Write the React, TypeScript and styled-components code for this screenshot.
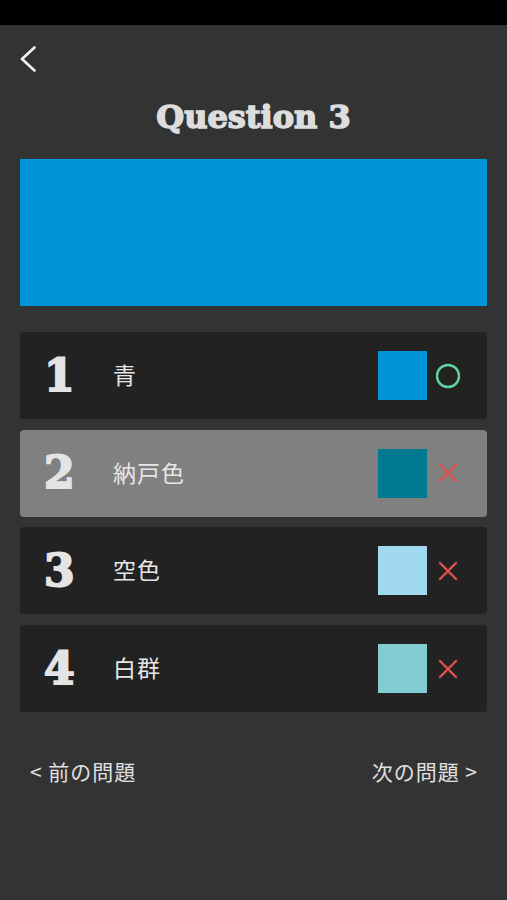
import React from 'react'
import styled, { createGlobalStyle } from 'styled-components'

const GlobalStyle = createGlobalStyle`
  body{
    margin: 0;
    background: #333333;
    font-family: "Noto Sans CJK JP", "Noto Sans", sans-serif;
  }
`

type Choice = {
  no: number
  name: string
  color: string
  correct: boolean
}

const choices: Choice[] = [
  { no: 1, name: '青', color: '#0095d9', correct: true },
  { no: 2, name: '納戸色', color: '#007a91', correct: false },
  { no: 3, name: '空色', color: '#a0d8ef', correct: false },
  { no: 4, name: '白群', color: '#83ccd2', correct: false },
]

const selected = 2

const Quiz = () => {
  return (
    <Screen>
      <GlobalStyle />
      <StatusBar />
      <Header>
        <BackButton aria-label="back">
          <svg width="16" height="26" viewBox="0 0 16 26">
            <polyline points="14.5,1.5 2,13 14.5,24.5" fill="none" stroke="#f2f2f2" strokeWidth="2.6" strokeLinecap="round" strokeLinejoin="round" />
          </svg>
        </BackButton>
        <Title>Question 3</Title>
      </Header>
      <Body>
        <Sample color="#0095d9" />
        <ChoiceList>
          {choices.map((c) => (
            <ChoiceCard key={c.no} $active={c.no === selected}>
              <Number>{c.no}</Number>
              <Name>{c.name}</Name>
              <Swatch color={c.color} />
              <Mark>
                {c.correct ? (
                  <svg width="26" height="26" viewBox="0 0 26 26">
                    <circle cx="13" cy="13" r="11" fill="none" stroke="#5fd69d" strokeWidth="2.4" />
                  </svg>
                ) : (
                  <svg width="26" height="26" viewBox="0 0 26 26">
                    <path d="M5 5 L21 21 M21 5 L5 21" stroke="#e05252" strokeWidth="2.4" strokeLinecap="round" />
                  </svg>
                )}
              </Mark>
            </ChoiceCard>
          ))}
        </ChoiceList>
        <Nav>
          <NavLink>&lt; 前の問題</NavLink>
          <NavLink>次の問題 &gt;</NavLink>
        </Nav>
      </Body>
    </Screen>
  )
}

const Screen = styled.div`
  min-height: 900px;
  background: #333333;
`

const StatusBar = styled.div`
  height: 25px;
  background: #000;
`

const Header = styled.div`
  display: flex;
  flex-direction: column;
  padding: 21px 20px 0;
`

const BackButton = styled.div`
  width: 16px;
  height: 26px;
`

const Title = styled.h1`
  margin: 25px 0 0;
  text-align: center;
  color: #dddddd;
  font-family: "DejaVu Serif", serif;
  font-weight: 900;
  font-size: 32px;
  line-height: 40px;
  -webkit-text-stroke: 1.5px #dddddd;
`

const Body = styled.div`
  padding: 0 20px;
`

const Sample = styled.div<{ color: string }>`
  margin-top: 22px;
  height: 147px;
  background: ${(p) => p.color};
`

const ChoiceList = styled.div`
  display: flex;
  flex-direction: column;
  gap: 10.7px;
  margin-top: 26px;
`

const ChoiceCard = styled.div<{ $active: boolean }>`
  display: flex;
  align-items: center;
  height: 87px;
  padding: 0 26px 0 24px;
  border-radius: 4px;
  background: ${(p) => (p.$active ? '#808080' : '#222222')};
`

const Number = styled.div`
  width: 69px;
  color: #e4e4e4;
  font-family: "DejaVu Serif", serif;
  font-weight: 900;
  font-size: 44px;
  line-height: 1;
  -webkit-text-stroke: 2px #e4e4e4;
`

const Name = styled.div`
  flex: 1;
  color: #e6e6e6;
  font-size: 23px;
  line-height: 30px;
  letter-spacing: 1px;
  padding-bottom: 3px;
`

const Swatch = styled.div<{ color: string }>`
  width: 49px;
  height: 49px;
  background: ${(p) => p.color};
`

const Mark = styled.div`
  width: 26px;
  height: 26px;
  margin-left: 8px;
`

const Nav = styled.div`
  display: flex;
  justify-content: space-between;
  padding: 45px 9px 0 10px;
`

const NavLink = styled.span`
  color: #e0e0e0;
  font-size: 21px;
  line-height: 28px;
  letter-spacing: 1px;
  white-space: pre;
`

export default Quiz
